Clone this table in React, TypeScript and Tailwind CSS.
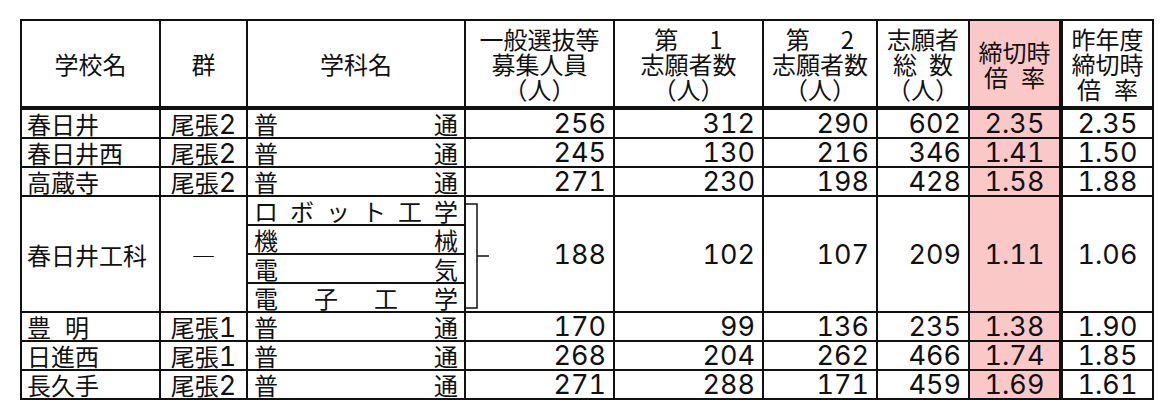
import React from "react";

type Row = {
  name: React.ReactNode;
  gun: string;
  bosyu: number;
  d1: number;
  d2: number;
  total: number;
  rate: string;
  prev: string;
};

const top: Row[] = [
  { name: "春日井", gun: "尾張2", bosyu: 256, d1: 312, d2: 290, total: 602, rate: "2.35", prev: "2.35" },
  { name: "春日井西", gun: "尾張2", bosyu: 245, d1: 130, d2: 216, total: 346, rate: "1.41", prev: "1.50" },
  { name: "高蔵寺", gun: "尾張2", bosyu: 271, d1: 230, d2: 198, total: 428, rate: "1.58", prev: "1.88" },
];

const bottom: Row[] = [
  {
    name: (
      <>
        豊<span className="ml-[14px]">明</span>
      </>
    ),
    gun: "尾張1",
    bosyu: 170,
    d1: 99,
    d2: 136,
    total: 235,
    rate: "1.38",
    prev: "1.90",
  },
  { name: "日進西", gun: "尾張1", bosyu: 268, d1: 204, d2: 262, total: 466, rate: "1.74", prev: "1.85" },
  { name: "長久手", gun: "尾張2", bosyu: 271, d1: 288, d2: 171, total: 459, rate: "1.69", prev: "1.61" },
];

const cell = "border-2 border-[#111] p-0";
const num = "font-['Inter',sans-serif] tabular-nums text-[27px] leading-[27px] text-right pr-[7px]";
const dec = "font-['Inter',sans-serif] tabular-nums text-[27px] leading-[27px] text-center";
const pink = "bg-[#fbc8c8] border-r-[4px] border-r-double";

function Spread({ chars }: { chars: string[] }) {
  return (
    <div className="flex justify-between pl-[6px] pr-[6px]">
      {chars.map((c, i) => (
        <span key={i}>{c}</span>
      ))}
    </div>
  );
}

function Gun({ text }: { text: string }) {
  return (
    <>
      {text.slice(0, 2)}
      <span className="font-['Inter',sans-serif] tabular-nums text-[27px] leading-[20px]">{text.slice(2)}</span>
    </>
  );
}

function BodyRow({ r }: { r: Row }) {
  return (
    <tr className="h-[29px]">
      <td className={`${cell} pl-[5px] text-left`}>{r.name}</td>
      <td className={`${cell} text-center`}>
        <Gun text={r.gun} />
      </td>
      <td className={cell}>
        <Spread chars={["普", "通"]} />
      </td>
      <td className={`${cell} ${num}`}>{r.bosyu}</td>
      <td className={`${cell} ${num}`}>{r.d1}</td>
      <td className={`${cell} ${num}`}>{r.d2}</td>
      <td className={`${cell} ${num}`}>{r.total}</td>
      <td className={`${cell} ${pink} ${dec}`}>{r.rate}</td>
      <td className={`${cell} ${dec}`}>{r.prev}</td>
    </tr>
  );
}

function Head({ lines }: { lines: React.ReactNode[] }) {
  return (
    <div className="flex flex-col items-center leading-[25px]">
      {lines.map((l, i) => (
        <span key={i} className="whitespace-nowrap">
          {l}
        </span>
      ))}
    </div>
  );
}

export default function App() {
  const h = `${cell} border-b-[4px] border-b-double text-center align-middle font-normal`;
  return (
    <div className="min-h-screen bg-white pl-[20px] pt-[19px] font-['Noto_Sans_CJK_JP',sans-serif] text-[24px] text-[#111]">
      <table className="w-[1132px] table-fixed border-collapse leading-[27px]">
        <colgroup>
          <col className="w-[139px]" />
          <col className="w-[87px]" />
          <col className="w-[218px]" />
          <col className="w-[149px]" />
          <col className="w-[149px]" />
          <col className="w-[114px]" />
          <col className="w-[92px]" />
          <col className="w-[92px]" />
          <col className="w-[92px]" />
        </colgroup>
        <thead>
          <tr className="h-[88px]">
            <th className={h}>学校名</th>
            <th className={h}>群</th>
            <th className={h}>学科名</th>
            <th className={h}>
              <Head lines={["一般選抜等", "募集人員", "（人）"]} />
            </th>
            <th className={h}>
              <Head
                lines={[
                  <>
                    第<span className="inline-block w-[31px]" />1
                  </>,
                  "志願者数",
                  "（人）",
                ]}
              />
            </th>
            <th className={h}>
              <Head
                lines={[
                  <>
                    第<span className="inline-block w-[31px]" />2
                  </>,
                  "志願者数",
                  "（人）",
                ]}
              />
            </th>
            <th className={h}>
              <Head
                lines={[
                  "志願者",
                  <>
                    総<span className="inline-block w-[12px]" />数
                  </>,
                  "（人）",
                ]}
              />
            </th>
            <th className={`${h} ${pink}`}>
              <Head
                lines={[
                  "締切時",
                  <>
                    倍<span className="inline-block w-[13px]" />率
                  </>,
                ]}
              />
            </th>
            <th className={h}>
              <Head
                lines={[
                  "昨年度",
                  "締切時",
                  <>
                    倍<span className="inline-block w-[13px]" />率
                  </>,
                ]}
              />
            </th>
          </tr>
        </thead>
        <tbody>
          {top.map((r, i) => (
            <BodyRow key={i} r={r} />
          ))}
          <tr className="h-[29px]">
            <td rowSpan={4} className={`${cell} pl-[5px] text-left align-middle`}>
              春日井工科
            </td>
            <td rowSpan={4} className={`${cell} text-center align-middle`}>
              ―
            </td>
            <td className={cell}>
              <Spread chars={["ロ", "ボ", "ッ", "ト", "工", "学"]} />
            </td>
            <td rowSpan={4} className={`${cell} ${num} relative align-middle`}>
              <svg
                className="absolute left-0 top-0"
                width="26"
                height="116"
                viewBox="0 0 26 116"
                fill="none"
                stroke="#111"
                strokeWidth="1.5"
              >
                <path d="M0 7 H11 V111 H0 M11 59 H23" />
              </svg>
              188
            </td>
            <td rowSpan={4} className={`${cell} ${num} align-middle`}>
              102
            </td>
            <td rowSpan={4} className={`${cell} ${num} align-middle`}>
              107
            </td>
            <td rowSpan={4} className={`${cell} ${num} align-middle`}>
              209
            </td>
            <td rowSpan={4} className={`${cell} ${pink} ${dec} align-middle`}>
              1.11
            </td>
            <td rowSpan={4} className={`${cell} ${dec} align-middle`}>
              1.06
            </td>
          </tr>
          <tr className="h-[29px]">
            <td className={cell}>
              <Spread chars={["機", "械"]} />
            </td>
          </tr>
          <tr className="h-[29px]">
            <td className={cell}>
              <Spread chars={["電", "気"]} />
            </td>
          </tr>
          <tr className="h-[29px]">
            <td className={cell}>
              <Spread chars={["電", "子", "工", "学"]} />
            </td>
          </tr>
          {bottom.map((r, i) => (
            <BodyRow key={i} r={r} />
          ))}
        </tbody>
      </table>
    </div>
  );
}
